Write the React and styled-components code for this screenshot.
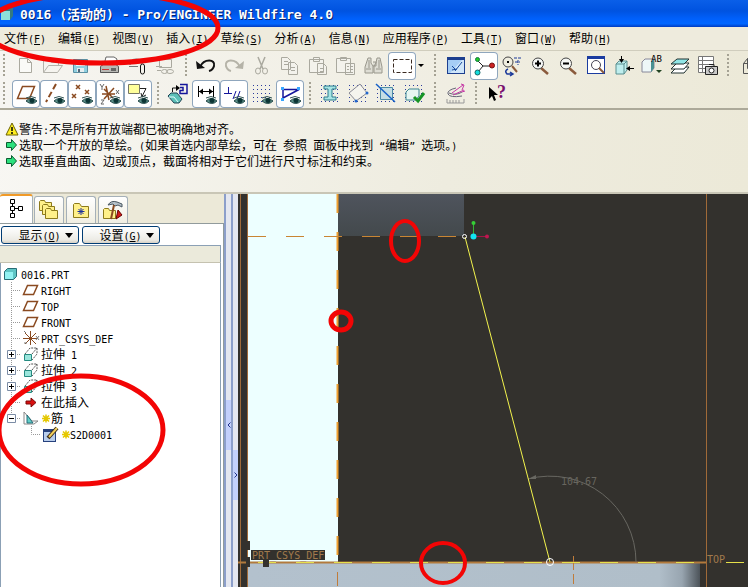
import React from "react";
import styled, { createGlobalStyle, css } from "styled-components";

const GlobalStyle = createGlobalStyle`
  * { box-sizing: border-box; }
  html, body { margin: 0; }
  body {
    background: #ece9d8;
    font-family: "Noto Sans CJK SC", "DejaVu Sans Mono", sans-serif;
    font-size: 12px;
    line-height: 16px;
    color: #000;
  }
  button { font: inherit; color: inherit; padding: 0; margin: 0; border: 0; background: none; }
  svg { display: block; }
`;

/* ---------- text ---------- */

const Latin = styled.span`
  font-family: "DejaVu Sans Mono", monospace;
  font-size: 10px;
  line-height: 1;
  white-space: pre;
`;

const TitleLatin = styled(Latin)`
  font-size: 13px;
`;

const Key = styled.span`
  text-decoration: underline;
`;

function Mixed({ text, as: Part = Latin }) {
  return text
    .split(/([\x20-\x7e“”]+)/)
    .filter(Boolean)
    .map((piece, i) => (/^[\x20-\x7e“”]/.test(piece) ? <Part key={i}>{piece}</Part> : piece));
}

function Mnemonic({ label, letter }) {
  return (
    <>
      {label}
      <Latin>
        (<Key>{letter}</Key>)
      </Latin>
    </>
  );
}

/* ---------- window frame ---------- */

const Window = styled.div`
  position: relative;
  display: flex;
  flex-direction: column;
  height: 100vh;
  overflow: hidden;
`;

const TitleBar = styled.header`
  display: flex;
  align-items: center;
  gap: 6px;
  flex: none;
  height: 27px;
  background: linear-gradient(#0a5fe8, #0053e0 40%, #0060fc 70%, #0066ff 88%, #003bc0);
  color: #fff;
  font-size: 13px;
  font-weight: bold;
  text-shadow: 1px 1px 0 #06226e;
  white-space: pre;
`;

const MenuBar = styled.nav`
  display: flex;
  align-items: center;
  gap: 12px;
  flex: none;
  height: 24px;
  padding: 0 4px 2px;
  background: #eeebdd;
  border-bottom: 1px solid #d0cdbd;
  white-space: nowrap;
`;

const MenuItem = styled.button`
  flex: none;
`;

const ToolArea = styled.section`
  flex: none;
  height: 59px;
  padding-top: 1px;
  background: linear-gradient(90deg, #f6f5f1, #ece9d8);
  border-bottom: 2px solid #aca999;
`;

const ToolRow = styled.div`
  display: flex;
  align-items: center;
  height: 28px;
  padding-left: 12px;
  position: relative;
  overflow: hidden;
`;

const Grip = styled.span`
  flex: none;
  width: ${(p) => p.$w || 12}px;
  height: 24px;
  background: repeating-linear-gradient(#a5a294 0 2px, transparent 2px 4px) center / 2px 24px no-repeat;
`;

const StartGrip = styled(Grip)`
  margin-left: -12px;
  width: 12px;
  background-position: 3px 0;
`;

const ToolButton = styled.button`
  flex: none;
  width: 28px;
  height: 28px;
  border-radius: 4px;
  ${(p) =>
    p.$on &&
    css`
      background: #fff;
      box-shadow: inset 0 0 0 1px #8fa6bd;
    `}
`;

const DropArrow = styled.button`
  flex: none;
  width: 12px;
  height: 28px;
`;

const Messages = styled.section`
  flex: none;
  height: 84px;
  padding: 11px 5px 0;
  background: linear-gradient(100deg, #f8f7f3, #eeecdf 60%, #ece9d8);
  border-bottom: 2px solid #c9c6b6;
  white-space: nowrap;
`;

const Message = styled.p`
  display: flex;
  align-items: center;
  height: 16px;
  margin: 0;
`;

const Main = styled.main`
  display: flex;
  flex: 1;
  min-height: 0;
`;

/* ---------- side panel ---------- */

const SidePanel = styled.aside`
  display: flex;
  flex-direction: column;
  flex: none;
  width: 224px;
`;

const Tabs = styled.div`
  display: flex;
  align-items: flex-end;
  gap: 2px;
  height: 29px;
`;

const Tab = styled.button`
  display: grid;
  place-items: center;
  width: 30px;
  height: 27px;
  border: 1px solid #a5b0b8;
  border-bottom: 0;
  border-radius: 3px 3px 0 0;
  background: linear-gradient(#fff, #f0eee2);
  ${(p) =>
    p.$active &&
    css`
      width: 33px;
      height: 29px;
      margin-right: -1px;
      padding-bottom: 2px;
      border-left: 0;
      border-top: 2px solid #f09a28;
      background: #fff;
    `}
`;

const TabBody = styled.div`
  display: flex;
  flex-direction: column;
  flex: 1;
  min-height: 0;
  border-top: 1px solid #919b9c;
  border-right: 1px solid #919b9c;
  background: #fff;
`;

const PanelButtons = styled.div`
  display: flex;
  gap: 3px;
  padding: 2px 1px 1px;
`;

const PanelButton = styled.button`
  display: flex;
  align-items: center;
  justify-content: center;
  gap: 4px;
  width: 78px;
  height: 18px;
  padding-left: 11px;
  border: 1px solid #003c74;
  border-radius: 3px;
  background: linear-gradient(#fff, #ecebe5 80%, #d6d0c5);
`;

const TreeHeader = styled.div`
  height: 18px;
  margin-right: 2px;
  border: 1px solid #8ba0b5;
  border-bottom-color: #c5c2b0;
  border-left: 0;
  background: #ebeadb;
`;

const Tree = styled.ul`
  flex: 1;
  margin: 0 2px 0 0;
  padding: 3px 0 0;
  border-right: 1px solid #8ba0b5;
  border-left: 1px solid #8ba0b5;
  list-style: none;
`;

const TreeRow = styled.li`
  display: flex;
  align-items: center;
  height: 16px;
  white-space: pre;
`;

const TreeIcon = styled.svg.attrs({ height: 16 })`
  flex: none;
`;

const Splitters = styled.div`
  display: flex;
  flex: none;
  width: 14px;
  background: #eceef4;
`;

const Splitter = styled.div`
  display: flex;
  flex-direction: column;
  width: 7px;
  padding-top: ${(p) => p.$top}px;
  border-left: 2px solid #8c9fca;
  background: #e4e7f0;
`;

const Handle = styled.button`
  width: 100%;
  height: 50px;
  display: grid;
  place-items: center;
  background: #c3d0fb;
`;

const Viewport = styled.section`
  flex: 1;
  min-width: 0;
  overflow: hidden;
  background: #33312d;
`;

const Marks = styled.svg`
  position: absolute;
  top: 0;
  left: 0;
  pointer-events: none;
`;

/* ---------- tool icons, drawn on a 28 x 28 cell ---------- */

const dim = "#aaa99f";

const Eye = () => (
  <g>
    <path d="M14 21q5-5 11 0q-5 5-11 0z" fill="#5b8f88" stroke="#274b4b" />
    <circle cx="20" cy="20.500" r="2.500" fill="#0c3535" />
    <path d="M14 18q5-3 10 0" fill="none" stroke="#355" />
  </g>
);

const Lens = ({ children }) => (
  <g fill="none">
    <path d="M15 16l7 6" stroke="#8a5a3c" strokeWidth="2.500" />
    <circle cx="12" cy="11.500" r="5.500" fill="#f5f7f5" stroke="#444" />
    {children}
  </g>
);

const Dots = ({ x = 5, y = 5 }) => (
  <g stroke="#2a3c9c" strokeDasharray="1 3">
    {[0, 4, 8, 12, 16].map((d) => (
      <path key={d} d={`M${x} ${y + d + 0.5}h18`} />
    ))}
  </g>
);

const icons = {
  new: <path d="M7.500 6.500h8l4 4v10h-12zM15.500 6.500v4h4" fill="#fafaf7" stroke={dim} />,
  open: (
    <path d="M3.500 20.500v-12h6l2 2h7v3M3.500 20.500l5-7h14l-5 7zM14 8q4-3 6 1" fill="none" stroke="#b3b2aa" />
  ),
  save: (
    <g>
      <path d="M5.500 7.500h14v13h-14z" fill="#8fd0e0" stroke="#5a8fa2" />
      <path d="M8 8h9v6H8z" fill="#e9fbfb" />
      <path d="M9 16h7v4H9z" fill="#e6eef0" />
      <path d="M10 17h2v3h-2z" fill="#567" />
    </g>
  ),
  print: (
    <g>
      <path d="M8 13l2-8h8l3 2-2 7" fill="#fff" stroke="#666" />
      <path d="M4.500 14.500l4-3h10l4 3v6h-18z" fill="#b9b9b5" stroke="#555" />
      <path d="M6 17.500h7" stroke="#c33" />
      <path d="M15 16h5v3h-5z" fill="#666" />
    </g>
  ),
  mail: (
    <g fill="none">
      <path d="M6 13q0-6 6-6t6 5M5 14.500h9" stroke="#777" />
      <path d="M16.500 20v-6q0-2 2-2t2 2v6q0 2-2 2t-2-2v-4" stroke="#111" />
    </g>
  ),
  link: (
    <g fill="none" stroke={dim}>
      <path d="M7.500 7.500h12v8h-12zM4 14.500h6M5 18.500h4" />
      <ellipse cx="12.500" cy="19.500" rx="3" ry="2" />
      <ellipse cx="18" cy="19.500" rx="3.500" ry="2" />
    </g>
  ),
  undo: (
    <g>
      <path d="M8 15C12 6 24 7 22 14q-1 4-5 5" fill="none" stroke="#111" strokeWidth="2" />
      <path d="M4 9l1 8 8-1z" fill="#111" />
    </g>
  ),
  redo: (
    <g>
      <path d="M20 15C16 6 4 7 6 14q1 4 5 5" fill="none" stroke="#b5b3a8" strokeWidth="2" />
      <path d="M24 9l-1 8-8-1z" fill="#b5b3a8" />
    </g>
  ),
  cut: (
    <g fill="none" stroke={dim}>
      <path d="M10 5l5 12M17 5l-5 12" strokeWidth="1.500" />
      <ellipse cx="10" cy="19" rx="2.500" ry="3" />
      <ellipse cx="17" cy="19" rx="2.500" ry="3" />
    </g>
  ),
  copy: (
    <path
      d="M5.500 5.500h6l3 3v9h-9zM12.500 10.500h6l3 3v9h-9zM8 9.500h4M8 12.500h4M15 15.500h4M15 18.500h4"
      fill="#f3f2ec"
      stroke={dim}
    />
  ),
  paste: (
    <path
      d="M5.500 7.500h14v13h-14zM9.500 5.500h6v4h-6zM13.500 11.500h6l3 3v8h-9zM16 16.500h4M16 19.500h4"
      fill="#f3f2ec"
      stroke={dim}
    />
  ),
  pasteSpecial: (
    <path
      d="M4.500 6.500h14v14h-14zM8.500 5.500h6v3h-6zM13.500 11.500h9v11h-9zM15 14.500h2m1 0h3M15 17.500h2m1 0h3M15 20.500h2m1 0h3"
      fill="#f3f2ec"
      stroke={dim}
    />
  ),
  find: (
    <path
      d="M8 6h3v5l2 3v7H5v-6zM17 6h3l2 9v6h-8v-7l2-3zM13 10h3v4h-3M6 17h5M16 17h5M9 8v8M19 8v8"
      fill="#deddd4"
      stroke="#99978c"
    />
  ),
  select: <path d="M5.500 7.500h18v13h-18z" fill="none" stroke="#3a2a20" strokeDasharray="4 2" />,
  redraw: (
    <g>
      <path d="M5 5h18v17H5z" fill="#1d3f8f" />
      <path d="M6 8h16v13H6z" fill="#cfe6fa" />
      <path d="M6 8h14L8 21H6z" fill="#a5cdf5" />
      <path d="M20 10l-7 9M10 14l4 4M10 18l5-1" stroke="#174a9c" />
    </g>
  ),
  spin: (
    <g fill="none">
      <path d="M8 9l5 5h9M13 14l-5 6" stroke="#222" />
      <circle cx="7.500" cy="7.500" r="2" fill="#2c2" stroke="#174" />
      <circle cx="22" cy="13.500" r="2.500" fill="#c22" stroke="#711" />
      <circle cx="7.500" cy="20.500" r="2.500" fill="#1dd" stroke="#166" />
    </g>
  ),
  orient: (
    <g fill="none">
      <path d="M14 14l5 6" stroke="#8a5a3c" strokeWidth="2" />
      <circle cx="10" cy="10" r="5" stroke="#444" />
      <path d="M9 10h2" stroke="#000" strokeWidth="2" />
      <path d="M16 6h7M17 10h5M20 8v5" stroke="#1c3a9a" strokeDasharray="3 1" />
      <path d="M10 17q-4 2-1 5h5M12 20l3 2-3 2" stroke="#1c3a9a" strokeWidth="1.500" />
    </g>
  ),
  zoomIn: (
    <Lens>
      <path d="M9 11.500h6M12 8.500v6" stroke="#000" strokeWidth="2" />
    </Lens>
  ),
  zoomOut: (
    <Lens>
      <path d="M9 11.500h6" stroke="#000" strokeWidth="2" />
    </Lens>
  ),
  refit: (
    <g fill="none">
      <path d="M5 4h18v18H5z" fill="#1b3ca0" />
      <path d="M6 7h16v14H6z" fill="#fff" />
      <circle cx="14" cy="13" r="4.500" stroke="#445" />
      <path d="M17 16l5 5" stroke="#8a5a3c" strokeWidth="2" />
    </g>
  ),
  view: (
    <g>
      <path d="M6 12l3-3h8v9l-3 4H6z" fill="#bfeeee" stroke="#5b9090" />
      <path d="M6 12h8v10M14 12l3-3" fill="none" stroke="#5b9090" />
      <path d="M11.500 4v6M24 16.500h-6" stroke="#000" />
      <path d="M9 7l2.500 4L14 7zM20 14l-4 2.500L20 19z" />
    </g>
  ),
  saved: (
    <g>
      <path d="M4 10l3-3h9v9l-3 4H4z" fill="#eef7f7" stroke="#889" />
      <path d="M13 10l3-3v9l-3 4z" fill="#4a9090" />
      <path d="M18 18h6l-3 3z" fill="#242" />
      <text x="13" y="10" fontFamily="DejaVu Sans Mono, monospace" fontSize="9">
        AB
      </text>
    </g>
  ),
  layers: (
    <g stroke="#233">
      <path d="M5 21l6-6h12l-5 6z" fill="#fff" />
      <path d="M5 17l6-6h12l-5 6z" fill="#fff" />
      <path d="M5 12l6-5h12l-5 5z" fill="#8fe5e5" />
    </g>
  ),
  viewMgr: (
    <g>
      <path d="M4.500 4.500h15v16h-15zM4 8.500h15M4 12.500h15M4 16.500h15M8.500 5v15" fill="#fff" stroke="#777" />
      <path d="M11.500 14.500h12v8h-12zM15 12.500h5v2" fill="#c9c9c9" stroke="#222" />
      <circle cx="17.500" cy="18.500" r="2.500" fill="#fff" stroke="#222" />
    </g>
  ),
  wire: <path d="M9.500 11.500h10v10h-10zM13.500 6.500h10v10h-10zM9.500 11.500l4-5M19.500 11.500l4-5" fill="none" stroke="#555" />,
  plane: (
    <g>
      <path d="M10.500 6.500h12l-5 12h-12z" fill="none" stroke="#8a4a20" strokeWidth="1.500" />
      <Eye />
    </g>
  ),
  axis: (
    <g>
      <path d="M16 4L6 22" stroke="#8a4a20" strokeWidth="2" strokeDasharray="6 3" />
      <Eye />
    </g>
  ),
  points: (
    <g>
      <path d="M8 5l4 4m0-4l-4 4M4 14l4 4m0-4l-4 4M17 10l4 4m0-4l-4 4" stroke="#8a4a20" strokeWidth="1.500" />
      <Eye />
    </g>
  ),
  csys: (
    <g>
      <path d="M10 6l3 14M6 14h13M8 19L18 8M8 9l9 9" stroke="#8a4a20" strokeWidth="1.500" />
      <path d="M4 4l2 3l2-3M6 7v3M5 20h3l-3 4h3M20 10l3 4m0-4l-3 4" stroke="#666" fill="none" />
      <Eye />
    </g>
  ),
  note: (
    <g>
      <path d="M4.500 4.500h11v9h-11z" fill="#ffff9a" stroke="#776" />
      <path d="M16 8.500h6l-4 8M17 13l1 4 4-2" stroke="#222" fill="none" />
      <Eye />
    </g>
  ),
  sketchView: (
    <g>
      <path d="M8.500 12v-4h5" fill="none" stroke="#111" />
      <path d="M12 5l4 3-4 3z" />
      <path d="M16 4.500h7v9h-7v-3h3v-3h-3" fill="none" stroke="#14149a" strokeWidth="1.500" />
      <path d="M4 16l3-3h6l5 6-3 4h-5z" fill="#5dc0b8" stroke="#245" />
      <path d="M5 17h5l4 5" fill="none" stroke="#e5ffff" />
    </g>
  ),
  dims: (
    <g>
      <path d="M6.500 6v11M21.500 6v11M7 11.500h14" stroke="#000" />
      <path d="M7 11.500l4-3v6zM21 11.500l-4-3v6z" />
      <Eye />
    </g>
  ),
  constraints: (
    <g>
      <path d="M4 13.500h8M8.500 7v7M13 19l3-8M17 19l3-8" stroke="#15159c" />
      <Eye />
    </g>
  ),
  grid: (
    <g>
      <Dots />
      <Eye />
    </g>
  ),
  vertices: (
    <g>
      <path d="M7 20V9.500h16L7 18" fill="none" stroke="#15159c" strokeWidth="1.500" />
      <path d="M5 7h3v3H5zM21 7h3v3h-3zM5 18h3v3H5z" fill="#38a5ff" />
      <Eye />
    </g>
  ),
  modify: (
    <g>
      <Dots />
      <path d="M8 6h12v3h-4v8h4v3H8v-3h4V9H8z" fill="#a6e4e4" stroke="#2d7d8d" />
    </g>
  ),
  rotate: (
    <g>
      <Dots />
      <path d="M5 13L16 4L23 13L12 21z" fill="#f5f4ee" stroke="#8b8b96" />
      <circle cx="23" cy="13" r="1.500" fill="#26c" />
      <circle cx="12" cy="21" r="1.500" fill="#26c" />
    </g>
  ),
  trim: (
    <g>
      <Dots />
      <path d="M8.500 7.500h12v12h-12z" fill="#c5dfe4" stroke="#4e8ca5" />
      <path d="M4 4l19 18" stroke="#1761c8" strokeWidth="1.500" />
    </g>
  ),
  done: (
    <g>
      <Dots />
      <path d="M6 12l3-3h10v7l-3 4H6z" fill="#e6f6f2" stroke="#3b8590" />
      <path d="M14 17l4 4l6-8" fill="none" stroke="#179425" strokeWidth="3" />
    </g>
  ),
  analysis: (
    <g fill="none">
      <path d="M14 8q-9 2-8 6q2 4 14 2M7 13q7 3 13-1" stroke="#667" />
      <path d="M10 13L21 5M11 15l11-5M19 4l3 1-2 5M20 12l3-1" stroke="#c537a5" />
      <path d="M5 19v4h17v-4M8 20v3M11 20v3M14 20v3M17 20v3" stroke="#999" />
    </g>
  ),
  help: (
    <g>
      <path d="M7 7v12l3-3 2 5 2-1-2-5h4z" />
      <text x="15" y="18" fontFamily="Liberation Serif, serif" fontSize="18" fontWeight="bold" fill="#7a1070">
        ?
      </text>
    </g>
  ),
};

function Tool({ name, label, on }) {
  return (
    <ToolButton $on={on} aria-label={label} title={label}>
      <svg width="28" height="28" viewBox="0 0 28 28">
        {icons[name]}
      </svg>
    </ToolButton>
  );
}

/* ---------- data ---------- */

const menus = [
  ["文件", "F"],
  ["编辑", "E"],
  ["视图", "V"],
  ["插入", "I"],
  ["草绘", "S"],
  ["分析", "A"],
  ["信息", "N"],
  ["应用程序", "P"],
  ["工具", "T"],
  ["窗口", "W"],
  ["帮助", "H"],
];

const fileTools = [
  ["new", "新建"],
  ["open", "打开"],
  ["save", "保存"],
  ["print", "打印"],
  ["mail", "发送"],
  ["link", "链接"],
];

const editTools = [
  ["undo", "撤消"],
  ["redo", "重做"],
  ["cut", "剪切"],
  ["copy", "复制"],
  ["paste", "粘贴"],
  ["pasteSpecial", "选择性粘贴"],
  ["find", "查找"],
  ["select", "选取框", true],
];

const viewTools = [
  ["redraw", "重画"],
  ["spin", "旋转中心", true],
  ["orient", "定向模式"],
  ["zoomIn", "放大"],
  ["zoomOut", "缩小"],
  ["refit", "重新调整"],
  ["view", "重定向"],
  ["saved", "视图列表"],
  ["layers", "层"],
  ["viewMgr", "视图管理器"],
];

const datumTools = [
  ["plane", "平面", true],
  ["axis", "轴", true],
  ["points", "点", true],
  ["csys", "坐标系", true],
  ["note", "注释", true],
];

const sketchTools = [
  ["sketchView", "草绘视图"],
  ["dims", "尺寸", true],
  ["constraints", "约束", true],
  ["grid", "栅格"],
  ["vertices", "顶点", true],
];

const diagTools = [
  ["modify", "着色"],
  ["rotate", "开放端"],
  ["trim", "重叠"],
  ["done", "要求"],
];

const toolSet = (list) => list.map(([name, label, on]) => <Tool key={name} name={name} label={label} on={on} />);

/* ---------- tree drawings ---------- */

const branch = <path d="M10.500 0v16M12 8.500h8" stroke="#999" strokeDasharray="1 1" />;

const box = (open) => (
  <g>
    <path d={open ? "M10.500 0v8M12 8.500h7" : "M10.500 0v16M12 8.500h7"} stroke="#999" strokeDasharray="1 1" />
    <path d="M6.500 4.500h8v8h-8z" fill="#fff" stroke="#7b8ca5" />
    <path d={open ? "M8 8.500h5" : "M8 8.500h5M10.500 6v5"} stroke="#000" />
  </g>
);

const planeIcon = <path d="M26.500 3.500h10l-4 9h-10z" fill="#fff" stroke="#8a4a20" strokeWidth="1.500" />;

const extrudeIcon = (
  <g>
    <path d="M23.500 8.500h7v6h-7z" fill="#9be5dc" stroke="#258a80" />
    <path d="M24 8l5-6h7v6l-5 6M31 8l5-6" fill="none" stroke="#555" strokeDasharray="2 1" />
  </g>
);

const Burst = ({ x }) => (
  <path
    d={`M${x} 8.500h8M${x + 4} 4.500v8M${x + 1} 5.500l6 6M${x + 7} 5.500l-6 6`}
    stroke="#e5c800"
    strokeWidth="1.500"
  />
);

const treeRows = [
  {
    text: "0016.PRT",
    width: 20,
    art: (
      <g>
        <path d="M3.500 5.500l3-3h9v8l-3 3h-9z" fill="#5ec5c5" stroke="#286c75" />
        <path d="M4 6h8v7H4z" fill="#92f2f2" />
      </g>
    ),
  },
  ...["RIGHT", "TOP", "FRONT"].map((text) => ({
    text,
    width: 40,
    art: (
      <g>
        {branch}
        {planeIcon}
      </g>
    ),
  })),
  {
    text: "PRT_CSYS_DEF",
    width: 40,
    art: (
      <g>
        {branch}
        <path d="M29.500 1v14M22 8.500h14M24 3l11 11M35 3L24 14" stroke="#8a4a20" />
        <path d="M35 6l3 4m0-4l-3 4M23 1l2 2M23 13h3" stroke="#777" />
      </g>
    ),
  },
  ...["拉伸 1", "拉伸 2", "拉伸 3"].map((text) => ({
    text,
    width: 40,
    art: (
      <g>
        {box(false)}
        {extrudeIcon}
      </g>
    ),
  })),
  {
    text: "在此插入",
    width: 40,
    art: (
      <g>
        {branch}
        <path d="M25 7h5V4l5 4.500-5 4.500v-3h-5z" fill="#d80f0f" stroke="#7c0808" />
      </g>
    ),
  },
  {
    text: "筋 1",
    width: 50,
    art: (
      <g>
        {box(true)}
        <path d="M23 2l8 9h6l-4 3H23z" fill="#fff" stroke="#888" />
        <path d="M26 5l6 8h-6z" fill="#62cfc8" stroke="#236c79" />
        <Burst x={41} />
      </g>
    ),
  },
  {
    text: "S2D0001",
    width: 69,
    art: (
      <g>
        <path d="M30.500 0v8.500h9" fill="none" stroke="#999" strokeDasharray="1 1" />
        <path d="M42 3h13v13H42z" fill="#26417d" />
        <path d="M43 6h11v9H43z" fill="#b8cdec" />
        <path d="M47 12l9-10" stroke="#3a2a1c" strokeWidth="4" />
        <path d="M48 11l8-9" stroke="#f1cf5c" strokeWidth="2" />
        <Burst x={61} />
      </g>
    ),
  },
];

const folder = (x, y) => (
  <path d={`M${x + 0.5} ${y + 10.5}v-9l1-1h4l1 2h6v8z`} fill="#fff08a" stroke="#8c7a1c" />
);

const Caret = () => (
  <svg width="8" height="5" viewBox="0 0 8 5">
    <path d="M0 0h8L4 5z" />
  </svg>
);

/* ---------- model drawing ---------- */

function ModelDrawing() {
  return (
    <svg width="100%" height="100%">
      <defs>
        <linearGradient id="wall" x1="0" y1="0" x2="0" y2="1">
          <stop offset="0" stopColor="#4f545d" />
          <stop offset="1" stopColor="#43494c" />
        </linearGradient>
        <linearGradient id="base" x1="0" y1="0" x2="1" y2="0">
          <stop offset="0" stopColor="#b3c1cd" />
          <stop offset="0.910" stopColor="#b0bec9" />
          <stop offset="0.960" stopColor="#98a5b0" />
          <stop offset="1" stopColor="#4c5359" />
        </linearGradient>
      </defs>
      <path d="M10 0h90v368h-90z" fill="#edffff" />
      <path d="M100 0h126v42H100z" fill="url(#wall)" />
      <rect x="10" y="369" width="452" height="40" fill="url(#base)" />
      <path d="M2.500 0v500M9.500 0v500M468.500 0v500" stroke="#a06a38" />
      <path d="M99.500 0v366" stroke="#f0a030" strokeWidth="2" strokeDasharray="19 19" />
      <path d="M99.500 378v30M335.500 362v28" stroke="#c07c3a" strokeDasharray="14 4" />
      <path d="M10 42.500h216" stroke="#c98533" strokeDasharray="18 20" />
      <path d="M0 368.500h468" stroke="#b27a3c" strokeWidth="2" />
      <path d="M20 368.500h448M488 368.500h22" stroke="#e6e04a" strokeDasharray="18 20" />
      <path d="M8 347h4v9H8zM8 363h4v10H8zM25 366h6v7h-6zM13 356h74v10H13z" fill="#33312d" />
      <g fontFamily="DejaVu Sans Mono, monospace" fontSize="10" fill="#a17a4c">
        <text x="14" y="365">
          PRT_CSYS_DEF
        </text>
        <text x="469" y="369">
          TOP
        </text>
        <text x="323" y="291" fill="#68665f">
          104.67
        </text>
      </g>
      <path d="M290 285A86 86 0 0 1 398 368" fill="none" stroke="#686761" />
      <path d="M290 285l8-4v4z" fill="#686761" />
      <path d="M227 43L312 368" stroke="#f3f34d" />
      <circle cx="226.500" cy="42.500" r="2" fill="none" stroke="#fff" />
      <circle cx="312" cy="368" r="3.500" fill="none" stroke="#fff" />
      <path d="M235.500 42V29" stroke="#33b533" />
      <path d="M236 42.500h13" stroke="#a41646" />
      <circle cx="235.500" cy="29" r="2" fill="#36cf36" />
      <circle cx="249" cy="42.500" r="2" fill="#c01650" />
      <circle cx="235.500" cy="42.500" r="3" fill="#12e4f2" />
    </svg>
  );
}

/* ---------- page ---------- */

export default function App() {
  return (
    <Window>
      <GlobalStyle />
      <TitleBar>
        <svg width="14" height="16" viewBox="0 0 14 16">
          <path d="M1 5l4-4h8v9l-3 4H1z" fill="#347a80" />
          <path d="M1 5h9v9H1z" fill="#8de0da" />
        </svg>
        <span>
          <Mixed text="0016 (活动的) - Pro/ENGINEER Wildfire 4.0" as={TitleLatin} />
        </span>
      </TitleBar>
      <MenuBar>
        {menus.map(([label, letter]) => (
          <MenuItem key={label}>
            <Mnemonic label={label} letter={letter} />
          </MenuItem>
        ))}
      </MenuBar>
      <ToolArea>
        <ToolRow>
          <StartGrip />
          {toolSet(fileTools)}
          <Grip />
          {toolSet(editTools)}
          <DropArrow aria-label="选取框选项">
            <svg width="12" height="28" viewBox="0 0 12 28">
              <path d="M2 12h6l-3 3z" />
            </svg>
          </DropArrow>
          <Grip $w={14} />
          {toolSet(viewTools)}
          <Grip />
          <Tool name="wire" label="线框" />
        </ToolRow>
        <ToolRow>
          <StartGrip />
          {toolSet(datumTools)}
          <Grip />
          {toolSet(sketchTools)}
          <Grip />
          {toolSet(diagTools)}
          <Grip $w={14} />
          <Tool name="analysis" label="分析" />
          <Grip />
          <Tool name="help" label="帮助" />
        </ToolRow>
      </ToolArea>
      <Messages>
        <Message>
          <svg width="14" height="14" viewBox="0 0 14 14">
            <path d="M7 1l6 12H1z" fill="#ffee20" stroke="#6b6300" />
            <path d="M7 5v4M7 10v2" stroke="#000" strokeWidth="1.500" />
          </svg>
          <span>
            <Mixed text="警告:不是所有开放端都已被明确地对齐。" />
          </span>
        </Message>
        {[
          "选取一个开放的草绘。(如果首选内部草绘，可在 参照 面板中找到 “编辑” 选项。)",
          "选取垂直曲面、边或顶点，截面将相对于它们进行尺寸标注和约束。",
        ].map((text) => (
          <Message key={text}>
            <svg width="14" height="14" viewBox="0 0 14 14">
              <path d="M1.500 4.500h5v-3l5 5.500-5 5.500v-3h-5z" fill="#2ce07c" stroke="#0b5c30" />
            </svg>
            <span>
              <Mixed text={text} />
            </span>
          </Message>
        ))}
      </Messages>
      <Main>
        <SidePanel>
          <Tabs>
            <Tab $active aria-label="模型树">
              <svg width="16" height="20" viewBox="0 0 16 20">
                <path
                  d="M2.500 0.500h4v4h-4zM2.500 7.500h4v4h-4zM2.500 14.500h4v4h-4zM10.500 7.500h4v4h-4zM4.500 5v2M4.500 12v2M7 9.500h3"
                  fill="none"
                  stroke="#000"
                />
              </svg>
            </Tab>
            <Tab aria-label="文件夹浏览器">
              <svg width="20" height="20" viewBox="0 0 20 20">
                {folder(0, 0)}
                {folder(3, 4)}
                {folder(6, 8)}
              </svg>
            </Tab>
            <Tab aria-label="收藏夹">
              <svg width="18" height="18" viewBox="0 0 18 18">
                <path d="M1.500 16.500v-13l1-1h5l2 3h7v11z" fill="#fff08a" stroke="#8c7a1c" />
                <path d="M9 7v7M5.500 10.500h7M6.500 8l5 5M11.500 8l-5 5" stroke="#1c2f9c" />
              </svg>
            </Tab>
            <Tab aria-label="连接">
              <svg width="20" height="20" viewBox="0 0 20 20">
                {folder(0, 8)}
                <path d="M5 5q3-5 9-3l5 2v3l-4-2-3 1-2-2z" fill="#b5c0c8" stroke="#4b5862" />
                <path d="M11 5L8 19" stroke="#8a4a20" strokeWidth="2" />
                <path d="M13 19l2-9 4 5z" fill="#d01a1a" stroke="#600" />
              </svg>
            </Tab>
          </Tabs>
          <TabBody>
            <PanelButtons>
              <PanelButton>
                <span>
                  <Mnemonic label="显示" letter="O" />
                </span>
                <Caret />
              </PanelButton>
              <PanelButton>
                <span>
                  <Mnemonic label="设置" letter="G" />
                </span>
                <Caret />
              </PanelButton>
            </PanelButtons>
            <TreeHeader />
            <Tree>
              {treeRows.map(({ text, width, art }) => (
                <TreeRow key={text}>
                  <TreeIcon width={width}>{art}</TreeIcon>
                  <span>
                    <Mixed text={text} />
                  </span>
                </TreeRow>
              ))}
            </Tree>
          </TabBody>
        </SidePanel>
        <Splitters>
          <Splitter $top={206}>
            <Handle aria-label="收起">
              <svg width="4" height="6" viewBox="0 0 4 6">
                <path d="M3.500 0.500L1 3l2.500 2.500" fill="none" stroke="#22348c" />
              </svg>
            </Handle>
          </Splitter>
          <Splitter $top={256}>
            <Handle aria-label="展开">
              <svg width="4" height="6" viewBox="0 0 4 6">
                <path d="M0.500 0.500L3 3L0.500 5.500" fill="none" stroke="#22348c" />
              </svg>
            </Handle>
          </Splitter>
        </Splitters>
        <Viewport>
          <ModelDrawing />
        </Viewport>
      </Main>
      <Marks width="748" height="587" viewBox="0 0 748 587" fill="none" stroke="#f30505" strokeWidth="4">
        <ellipse cx="101" cy="28" rx="117" ry="35" strokeWidth="5" />
        <ellipse cx="81" cy="430" rx="82" ry="54" strokeWidth="5" />
        <ellipse cx="405" cy="241" rx="14" ry="20" />
        <ellipse cx="341" cy="321" rx="10" ry="9" strokeWidth="5" />
        <ellipse cx="443" cy="563" rx="22" ry="20" />
      </Marks>
    </Window>
  );
}
